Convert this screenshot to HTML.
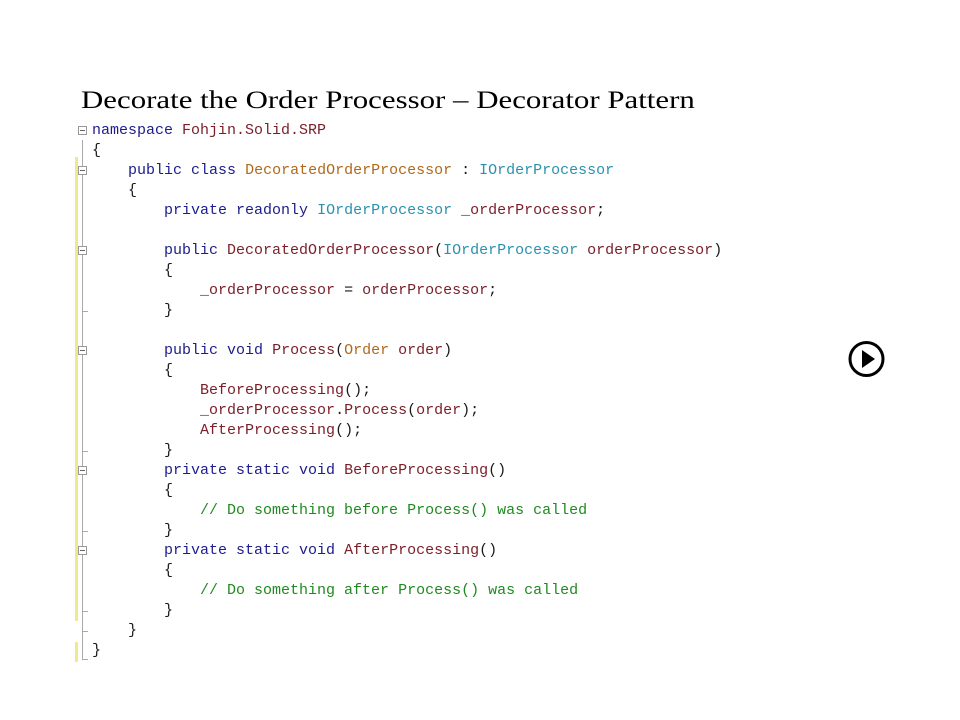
<!DOCTYPE html>
<html><head><meta charset="utf-8"><style>
body{margin:0;width:960px;height:720px;background:#fff;position:relative;overflow:hidden}
.t{position:absolute;left:81px;top:87px;font-family:"Liberation Serif",serif;font-size:25px;color:#000;white-space:nowrap;transform:scaleX(1.235);transform-origin:0 0}
pre{position:absolute;left:92px;top:121px;margin:0;font-family:"Liberation Mono",monospace;font-size:15px;line-height:20px;color:#1a1a1a}
.k{color:#1c1c8c}.i{color:#7b1e28}.c{color:#b0691c}.n{color:#2b91af}.g{color:#1f8a1f}
.y{position:absolute;left:75px;width:3px;background:#f2e88a}
.box{position:absolute;left:78px;width:7px;height:7px;border:1px solid #999;background:#fff}
.box:after{content:"";position:absolute;left:1px;top:3px;width:5px;height:1px;background:#666}
.v{position:absolute;left:82px;width:1px;background:#aaa}
.e{position:absolute;left:82px;width:6px;height:1px;background:#aaa}
</style></head><body>
<div class="t">Decorate the Order Processor – Decorator Pattern</div>
<div class="y" style="top:157px;height:464px"></div>
<div class="y" style="top:642px;height:20px"></div>
<div class="v" style="top:140px;height:520px"></div>
<div class="box" style="top:126px"></div>
<div class="box" style="top:166px"></div>
<div class="box" style="top:246px"></div>
<div class="box" style="top:346px"></div>
<div class="box" style="top:466px"></div>
<div class="box" style="top:546px"></div>
<div class="e" style="top:311px"></div>
<div class="e" style="top:451px"></div>
<div class="e" style="top:531px"></div>
<div class="e" style="top:611px"></div>
<div class="e" style="top:631px"></div>
<div class="e" style="top:659px"></div>
<pre><span class="k">namespace</span> <span class="i">Fohjin.Solid.SRP</span>
{
    <span class="k">public class</span> <span class="c">DecoratedOrderProcessor</span> : <span class="n">IOrderProcessor</span>
    {
        <span class="k">private readonly</span> <span class="n">IOrderProcessor</span> <span class="i">_orderProcessor</span>;

        <span class="k">public</span> <span class="i">DecoratedOrderProcessor</span>(<span class="n">IOrderProcessor</span> <span class="i">orderProcessor</span>)
        {
            <span class="i">_orderProcessor</span> = <span class="i">orderProcessor</span>;
        }

        <span class="k">public void</span> <span class="i">Process</span>(<span class="c">Order</span> <span class="i">order</span>)
        {
            <span class="i">BeforeProcessing</span>();
            <span class="i">_orderProcessor</span>.<span class="i">Process</span>(<span class="i">order</span>);
            <span class="i">AfterProcessing</span>();
        }
        <span class="k">private static void</span> <span class="i">BeforeProcessing</span>()
        {
            <span class="g">// Do something before Process() was called</span>
        }
        <span class="k">private static void</span> <span class="i">AfterProcessing</span>()
        {
            <span class="g">// Do something after Process() was called</span>
        }
    }
}</pre>
<svg style="position:absolute;left:847px;top:340px" width="40" height="38" viewBox="0 0 40 38">
<circle cx="19.5" cy="19" r="16.5" fill="none" stroke="#000" stroke-width="3"/>
<path d="M15 10 L28 19 L15 28 Z" fill="#000"/>
</svg>
</body></html>
